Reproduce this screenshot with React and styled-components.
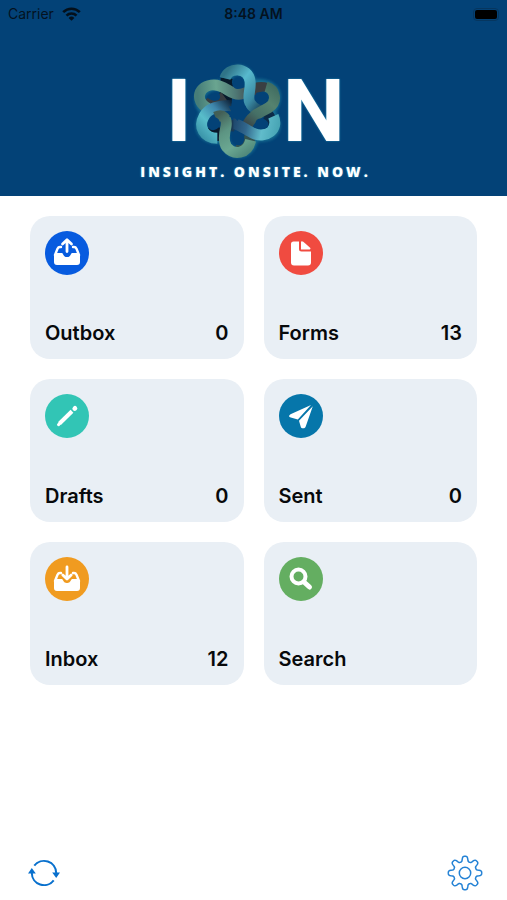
import styled, { createGlobalStyle } from "styled-components";

const GlobalStyle = createGlobalStyle`
  * {
    box-sizing: border-box;
  }

  body {
    margin: 0;
    background: #ffffff;
    color: #07090b;
    font-family: Inter, "Liberation Sans", sans-serif;
  }
`;

const Page = styled.div`
  min-height: 100vh;
  display: flex;
  flex-direction: column;
`;

const Header = styled.header`
  background: #034277;
  height: 196px;
`;

const StatusBar = styled.div`
  display: grid;
  grid-template-columns: 1fr auto 1fr;
  align-items: center;
  height: 28px;
  padding: 0 8px;
  color: #04121f;
  font-size: 14px;
  line-height: 20px;
`;

const Carrier = styled.span`
  display: flex;
  align-items: center;
  gap: 8px;
`;

const Clock = styled.time`
  font-weight: 600;
`;

const Battery = styled.span`
  justify-self: end;
  width: 26px;
  height: 13px;
  padding: 1px;
  border-radius: 4px;
  border: 1px solid #06365f;

  &::before {
    content: "";
    display: block;
    height: 100%;
    border-radius: 2px;
    background: #000000;
  }
`;

const Brand = styled.div`
  display: flex;
  flex-direction: column;
  align-items: center;
  padding: 32px 0 0 4px;
  color: #ffffff;
  text-shadow: 0 0 2px #2f9fc4;
`;

const Wordmark = styled.h1`
  display: flex;
  align-items: center;
  justify-content: center;
  height: 102px;
  margin: 0;
  font-family: Roboto, "Liberation Sans", sans-serif;
  font-size: 88px;
  font-weight: 700;
  line-height: 96px;

  svg {
    flex: none;
    margin: 0 -8px 0 -6px;
  }
`;

const Tagline = styled.p`
  margin: 0;
  font-family: "Open Sans", Inter, sans-serif;
  font-size: 14px;
  font-weight: 800;
  line-height: 20px;
  letter-spacing: 3px;
`;

const Tiles = styled.main`
  display: grid;
  grid-template-columns: 1fr 1fr;
  gap: 20px;
  padding: 20px 30px;
`;

const Tile = styled.button`
  display: flex;
  flex-direction: column;
  justify-content: space-between;
  height: 143px;
  padding: 15px 15px 14px;
  border: 0;
  border-radius: 20px;
  background: #e9eff5;
  color: inherit;
  font: inherit;
  cursor: pointer;
`;

const IconCircle = styled.span`
  display: block;
  width: 44px;
  height: 44px;
  border-radius: 50%;
  background: ${({ $color }) => $color};
  color: ${({ $color }) => $color};
`;

const TileLabel = styled.span`
  display: flex;
  justify-content: space-between;
  width: 100%;
  font-size: 20px;
  font-weight: 600;
  line-height: 24px;
`;

const Toolbar = styled.footer`
  display: flex;
  justify-content: space-between;
  margin-top: auto;
  padding: 0 22px 7px 24px;
`;

const ToolButton = styled.button`
  display: grid;
  place-items: center;
  width: 40px;
  height: 40px;
  padding: 0;
  border: 0;
  background: none;
  color: ${({ $color }) => $color};
  cursor: pointer;
`;

const WifiIcon = () => (
  <svg width="19" height="14" viewBox="0 0 19 14" aria-label="Wi-Fi">
    <g fill="none" stroke="#04101b" strokeWidth="2.6">
      <path d="M1.2 5.2a11.8 11.8 0 0 1 16.6 0" />
      <path d="M4.5 8.6a7.1 7.1 0 0 1 10 0" />
    </g>
    <path d="M9.5 13.8 6.6 10.900a4.100 4.100 0 0 1 5.800 0z" fill="#04101b" />
  </svg>
);

const gradients = [
  ["top", 105, 60, 235, 160, ["#2f7488", "#58b9cd", "#3b8ba4", "#0d2a42"]],
  ["upperRight", 270, 80, 170, 200, ["#3f6b60", "#55826f", "#456f66", "#373b40"]],
  ["upperLeft", 35, 110, 205, 100, ["#467d78", "#6aa590", "#4f7975", "#3c3f48"]],
  ["lowerLeft", 140, 135, 40, 230, ["#10283f", "#3f86ac", "#58bdca", "#3a93a8"]],
  ["bottom", 100, 165, 190, 290, ["#435f56", "#5c9482", "#6ba892", "#4c8377"]],
  ["lowerRight", 135, 190, 275, 220, ["#1b4267", "#31668c", "#61bccb", "#48a5b5"]],
];

const ribbon = (name) => ({ stroke: `url(#${name})` });

const Emblem = () => (
  <svg width="105" height="105" viewBox="0 0 315 315" role="img" aria-label="O">
    <defs>
      {gradients.map(([id, x1, y1, x2, y2, stops]) => (
        <linearGradient
          key={id}
          id={id}
          gradientUnits="userSpaceOnUse"
          x1={x1}
          y1={y1}
          x2={x2}
          y2={y2}
        >
          {stops.map((color, i) => (
            <stop key={color} offset={i / (stops.length - 1)} stopColor={color} />
          ))}
        </linearGradient>
      ))}
      <filter id="glow" x="-20%" y="-20%" width="140%" height="140%">
        <feGaussianBlur stdDeviation="4" />
      </filter>
      <mask id="holes" maskUnits="userSpaceOnUse" x="0" y="0" width="315" height="315">
        <rect width="315" height="315" fill="white" />
        <g fill="black">
          <ellipse cx="154" cy="70" rx="16" ry="20" />
          <ellipse cx="83" cy="110" rx="20" ry="15" transform="rotate(20 83 110)" />
          <ellipse cx="229" cy="114" rx="19" ry="16" transform="rotate(-25 229 114)" />
          <ellipse cx="228" cy="194" rx="20" ry="15" transform="rotate(20 228 194)" />
          <ellipse cx="83" cy="194" rx="18" ry="20" transform="rotate(30 83 194)" />
          <ellipse cx="158" cy="240" rx="17" ry="19" />
          <path d="M154 128 162 142 180 140 174 157 180 174 162 174 154 186 145 174 130 174 136 157 128 142 146 141z" />
        </g>
      </mask>
    </defs>
    <g fill="none" stroke="#228da5" strokeWidth="30" opacity="0.6" filter="url(#glow)">
      <path d="M118 80C118 18 194 18 196 78C240 68 275 90 268 122C266 140 256 150 250 160C288 200 264 245 204 230C196 298 120 298 115 235C60 252 20 210 60 160C20 125 45 70 113 80" />
    </g>
    <g fill="none" strokeWidth="33" mask="url(#holes)">
      <path d="M123 58C120 90 124 112 112 150" stroke="#071a2a" strokeWidth="38" />
      <path d="M54 130C70 142 92 132 116 114" stroke="#373c40" />
      <path d="M196 92C222 78 242 82 262 98" stroke="#3a3f42" strokeWidth="30" />
      <path d="M244 166C260 182 258 204 240 216" stroke="#0c2b48" strokeWidth="34" />
      <path d="M60 212C72 230 86 232 108 222" stroke="#09192a" strokeWidth="38" />
      <path d="M150 262C176 264 190 250 194 226" stroke="#35534f" strokeWidth="34" />
      <path d="M118 206C130 200 140 196 152 204" stroke="#1a3a55" strokeWidth="34" />
      <path d="M66 148C24 126 36 78 84 78C116 78 132 106 158 106C176 106 188 96 206 90" {...ribbon("upperLeft")} />
      <path d="M136 140C100 138 66 148 54 172C36 204 54 238 94 238" {...ribbon("lowerLeft")} />
      <path d="M117 58C126 24 186 22 192 66C196 92 182 114 192 132C202 150 222 158 250 158" {...ribbon("top")} />
      <path d="M240 84C268 92 276 128 248 146C222 160 192 172 182 204" {...ribbon("upperRight")} />
      <path d="M88 174C112 164 124 178 120 202C114 226 112 250 122 264C144 290 184 286 194 244" {...ribbon("bottom")} />
      <path d="M142 194C160 194 184 216 204 224C240 238 280 212 262 172" {...ribbon("lowerRight")} />
    </g>
  </svg>
);

const Tray = () => (
  <>
    <path
      d="M16 16h-1c-1.300 0-2 .6-2.500 1.700L10 24M28 16h1c1.300 0 2 .6 2.500 1.700L34 24"
      fill="none"
      stroke="white"
      strokeWidth="2.400"
      strokeLinecap="round"
    />
    <path
      d="M9 24.500 11 22h6c1 0 1.200 4 5 4s4-4 5-4h6l2 2.500V31a3 3 0 0 1-3 3H12a3 3 0 0 1-3-3z"
      fill="white"
    />
  </>
);

const OutboxIcon = () => (
  <svg viewBox="0 0 44 44">
    <Tray />
    <path d="M22 11v12" stroke="currentColor" strokeWidth="6" strokeLinecap="round" />
    <path
      d="M22 20.500V9.500M17.500 13 22 8.800l4.500 4.200"
      fill="none"
      stroke="white"
      strokeWidth="2.800"
      strokeLinecap="round"
      strokeLinejoin="round"
    />
  </svg>
);

const InboxIcon = () => (
  <svg viewBox="0 0 44 44">
    <Tray />
    <path
      d="M22 11v11M17.800 18.500 22 22.500l4.200-4"
      fill="none"
      stroke="currentColor"
      strokeWidth="5"
    />
    <path
      d="M22 10v11.500M17.800 18 22 22l4.200-4"
      fill="none"
      stroke="white"
      strokeWidth="2.800"
      strokeLinecap="round"
      strokeLinejoin="round"
    />
  </svg>
);

const FormsIcon = () => (
  <svg viewBox="0 0 44 44" fill="white">
    <path d="M14.500 10.500H20V18a2.500 2.500 0 0 0 2.500 2.500H32V31.500a3 3 0 0 1-3 3H15a3 3 0 0 1-3-3V13a2.500 2.500 0 0 1 2.500-2.500z" />
    <path d="M22 11v7.500h8.500c1 0 1.300-1 .6-1.700l-6.800-6C23.300 10 22 10 22 11z" />
  </svg>
);

const DraftsIcon = () => (
  <svg viewBox="0 0 44 44" fill="none" stroke="white" strokeLinecap="round">
    <path d="M27 17.300 14.500 29.500" strokeWidth="4" strokeLinecap="butt" />
    <path d="m15.500 28.500-2 2.200" strokeWidth="3" />
    <path d="m29.700 14.600.3-.3" strokeWidth="4.600" />
  </svg>
);

const SentIcon = () => (
  <svg viewBox="0 0 44 44" fill="white">
    <path d="M32 11 11.500 20.200c-2 1-1.900 2.900.3 3.400l7 2z" />
    <path d="M33.800 12.300 20 26.800l1.600 5.400c.5 2 1.200 2 2.600 2 1.500 0 2.100-.4 2.600-2z" />
  </svg>
);

const SearchIcon = () => (
  <svg viewBox="0 0 44 44" fill="none" stroke="white" strokeLinecap="round">
    <circle cx="19.500" cy="19.500" r="7" strokeWidth="4" />
    <path d="m25.500 25.500 5 4.500" strokeWidth="5" />
  </svg>
);

const RefreshIcon = () => (
  <svg width="34" height="34" viewBox="0 0 34 34" aria-hidden="true">
    <g fill="none" stroke="currentColor" strokeWidth="2">
      <path d="M7.300 9.700A12.200 12.200 0 0 1 29.200 17" />
      <path d="M26.700 24.300A12.200 12.200 0 0 1 4.800 17" />
    </g>
    <path d="M25.200 16.500h7.800L29.200 22zM1 17.500h7.800L4.800 12z" fill="currentColor" />
  </svg>
);

const gearOutline = Array.from({ length: 160 }, (_, i) => {
  const angle = (i / 160) * 2 * Math.PI;
  const radius = 14.2 + 2.6 * Math.tanh(2 * Math.cos(8 * angle));
  const x = 18 + radius * Math.sin(angle);
  const y = 18 - radius * Math.cos(angle);
  return `${x.toFixed(2)},${y.toFixed(2)}`;
}).join(" ");

const GearIcon = () => (
  <svg width="36" height="36" viewBox="0 0 36 36" aria-hidden="true">
    <g fill="none" stroke="currentColor" strokeWidth="1.500" strokeLinejoin="round">
      <polygon points={gearOutline} />
      <circle cx="18" cy="18" r="5.700" />
    </g>
  </svg>
);

const folders = [
  { name: "Outbox", count: 0, color: "#075bdf", Icon: OutboxIcon },
  { name: "Forms", count: 13, color: "#f04b40", Icon: FormsIcon },
  { name: "Drafts", count: 0, color: "#32c5b5", Icon: DraftsIcon },
  { name: "Sent", count: 0, color: "#0676aa", Icon: SentIcon },
  { name: "Inbox", count: 12, color: "#f09b20", Icon: InboxIcon },
  { name: "Search", color: "#64ae61", Icon: SearchIcon },
];

const App = () => (
  <>
    <GlobalStyle />
    <Page>
      <Header>
        <StatusBar>
          <Carrier>
            Carrier
            <WifiIcon />
          </Carrier>
          <Clock>8:48 AM</Clock>
          <Battery role="img" aria-label="Battery full" />
        </StatusBar>
        <Brand>
          <Wordmark>
            <span>I</span>
            <Emblem />
            <span>N</span>
          </Wordmark>
          <Tagline>INSIGHT. ONSITE. NOW.</Tagline>
        </Brand>
      </Header>
      <Tiles>
        {folders.map(({ name, count, color, Icon }) => (
          <Tile type="button" key={name}>
            <IconCircle $color={color} aria-hidden="true">
              <Icon />
            </IconCircle>
            <TileLabel>
              <span>{name}</span>
              {count !== undefined && <span>{count}</span>}
            </TileLabel>
          </Tile>
        ))}
      </Tiles>
      <Toolbar>
        <ToolButton type="button" aria-label="Refresh" $color="#0870cd">
          <RefreshIcon />
        </ToolButton>
        <ToolButton type="button" aria-label="Settings" $color="#2482d5">
          <GearIcon />
        </ToolButton>
      </Toolbar>
    </Page>
  </>
);

export default App;
